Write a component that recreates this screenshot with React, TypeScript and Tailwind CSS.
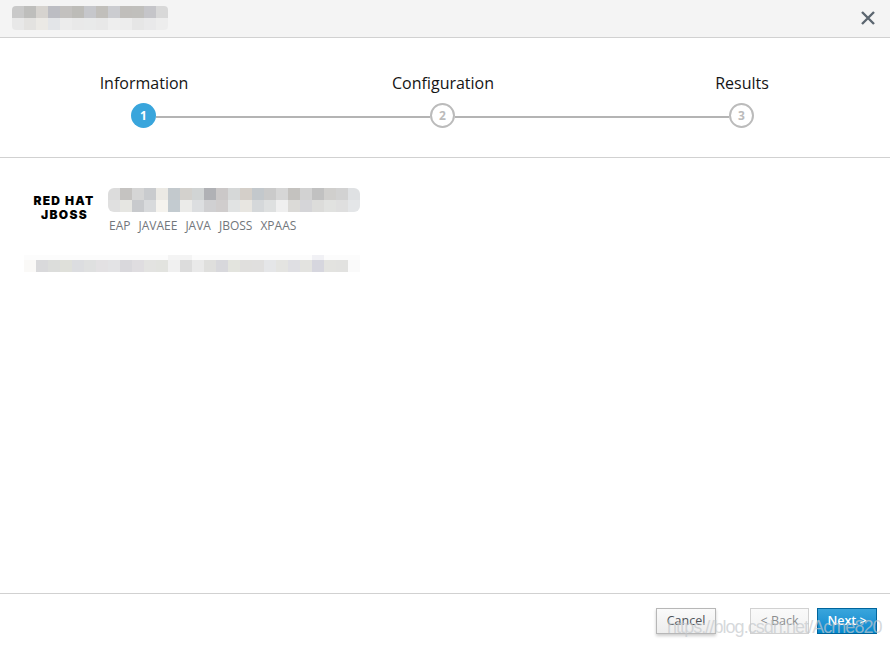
const headerRows = [
  ["c9c9c9","bebebc","d6d3cf","bcbdc3","c3c1bf","bdbcb8","c6c7cb","c1bfbb","cbccd0","c0bebb","c0bfbc","c5c5c9","d8d8d8"],
  ["e8e8e8","e3e2e0","ebe9e5","e3e5e8","ececec","e9e9e9","e9eaea","e8e8e8","eeeeee","ededed","e6e6e6","e9e9ea","ededed"],
];
const titleRows = [
  ["dcdcdc","c5c3c1","d5d5d5","c9cbce","ebe9e4","c3c9cd","d3d1cd","d1d4d4","b0b1b5","cbc8c8","d6d8d8","d4cfc9","c3c8cc","cacaca","d6d6d6","c4c2bf","d2d2d2","c1c1c1","d0cfcd","d2d2d2","dfe1e3"],
  ["e0e0e0","e6e6e2","c8cacd","d8dadc","f5f3ee","c3cbd0","ebebe9","dcdee0","d0d0d2","d0cdcd","e1e3e3","e8e6e1","d5d8da","dee0e0","efefef","dbdad7","d5d5d8","dcdcda","e1e2e0","dfdfdf","e4e6e8"],
];
const descRow = ["faf9f7","d9d9db","dcdddb","dfe0da","dcdde0","dfe0e0","e3e1e3","e3e3e5","d9d8dc","dfdde0","e3e3e1","e2e3df","f0f0f0","dcdcdc","e9e9e9","dfdfdd","d8d8dc","e3e4de","e0dfdd","e0dfde","e5e6e8","e4e4e1","dfdfe3","e3e3e0","d6d6de","e3e3e0","e2e2e0","fafafa"];
const descTop = descRow.map((_, i) => (i === 12 || i === 13 ? "f4f4f4" : i === 24 ? "f1f1f5" : "fcfcfc"));

function Mosaic({ rows, heights, rounded }: { rows: string[][]; heights: string[]; rounded: string }) {
  return (
    <div className={`flex flex-col overflow-hidden ${rounded}`}>
      {rows.map((row, r) => (
        <div key={r} className={`flex ${heights[r]}`}>
          {row.map((c, i) => (
            <div key={i} className="w-[12px] shrink-0" style={{ backgroundColor: `#${c}` }} />
          ))}
        </div>
      ))}
    </div>
  );
}

function Circle({ n, active }: { n: number; active?: boolean }) {
  return active ? (
    <div className="w-[25px] h-[25px] shrink-0 rounded-full bg-[#39a5dc] text-white flex items-center justify-center text-[12px] font-bold">
      {n}
    </div>
  ) : (
    <div className="w-[25px] h-[25px] shrink-0 rounded-full border-2 border-[#bbbbbb] bg-white text-[#bbbbbb] flex items-center justify-center text-[12px] font-bold">
      {n}
    </div>
  );
}

export default function App() {
  return (
    <div className="relative w-[890px] h-[646px] flex flex-col bg-white overflow-hidden font-['Open_Sans',sans-serif]">
      <header className="h-[38px] shrink-0 bg-[#f4f4f4] border-b border-[#d1d1d1] flex items-center justify-between pl-[12px] pr-[14px]">
        <Mosaic rows={headerRows} heights={["h-[12px]", "h-[12px]"]} rounded="rounded-[4px] -mt-[2px]" />
        <svg width="16" height="16" viewBox="0 0 16 16" className="-mt-[1px]">
          <path d="M2 2 L14 14 M14 2 L2 14" stroke="#5c6670" strokeWidth="2.4" fill="none" />
        </svg>
      </header>

      <section className="h-[120px] shrink-0 border-b border-[#d1d1d1] pt-[33px]">
        <div className="flex justify-between pl-[94px] pr-[98px] h-[24px] items-center text-[16px] text-[#151515]">
          <span className="w-[100px] text-center">Information</span>
          <span className="w-[102px] text-center whitespace-nowrap">Configuration</span>
          <span className="w-[100px] text-center">Results</span>
        </div>
        <div className="flex items-center pl-[131px] pr-[136px] mt-[8px]">
          <Circle n={1} active />
          <div className="flex-1 h-[2px] bg-[#b4b4b4] mt-[2px]" />
          <Circle n={2} />
          <div className="flex-1 h-[2px] bg-[#b4b4b4] mt-[2px]" />
          <Circle n={3} />
        </div>
      </section>

      <main className="flex-1 pt-[30px]">
        <div className="flex">
          <div className="w-[108px] shrink-0 pl-[33px] pt-[6px]">
            <div className="w-[62px] text-center font-['Inter',sans-serif] font-black text-[12px] leading-[14px] tracking-[1.3px] text-black">
              <div className="whitespace-nowrap">RED HAT</div>
              <div className="pl-[1px]">JBOSS</div>
            </div>
          </div>
          <div>
            <Mosaic rows={titleRows} heights={["h-[12px]", "h-[12px]"]} rounded="rounded-[6px]" />
            <div className="flex gap-[8px] pl-[1px] mt-[5px] text-[12px] leading-[18px] text-[#72767b]">
              <span>EAP</span>
              <span>JAVAEE</span>
              <span>JAVA</span>
              <span>JBOSS</span>
              <span>XPAAS</span>
            </div>
          </div>
        </div>
        <div className="pl-[24px] mt-[20px]">
          <Mosaic rows={[descTop, descRow]} heights={["h-[5px]", "h-[12px]"]} rounded="rounded-none" />
        </div>
      </main>

      <footer className="h-[53px] shrink-0 border-t border-[#d1d1d1] flex items-start pt-[14px] pl-[656px] text-[12.5px] leading-none">
        <button className="w-[60px] h-[26px] mr-[34px] border border-[#b7b7b7] bg-gradient-to-b from-[#fafafa] to-[#ededed] text-[#4d5258] shadow-[0_2px_3px_rgba(0,0,0,0.2)]">
          Cancel
        </button>
        <button className="w-[59px] h-[26px] mr-[8px] border border-[#d1d1d1] bg-gradient-to-b from-[#fafafa] to-[#f1f1f1] text-[#8b8d8f]">
          &lt; Back
        </button>
        <button className="w-[60px] h-[26px] border border-[#00659c] bg-gradient-to-b from-[#39a5dc] to-[#0088ce] text-white font-semibold">
          Next &gt;
        </button>
      </footer>

      <div className="absolute left-[667px] top-[617px] font-['Liberation_Sans',sans-serif] text-[18px] tracking-[-0.95px] leading-[20px] whitespace-nowrap text-[#c4c8cc]/70">
        https://blog.csdn.net/Acme820
      </div>
    </div>
  );
}
